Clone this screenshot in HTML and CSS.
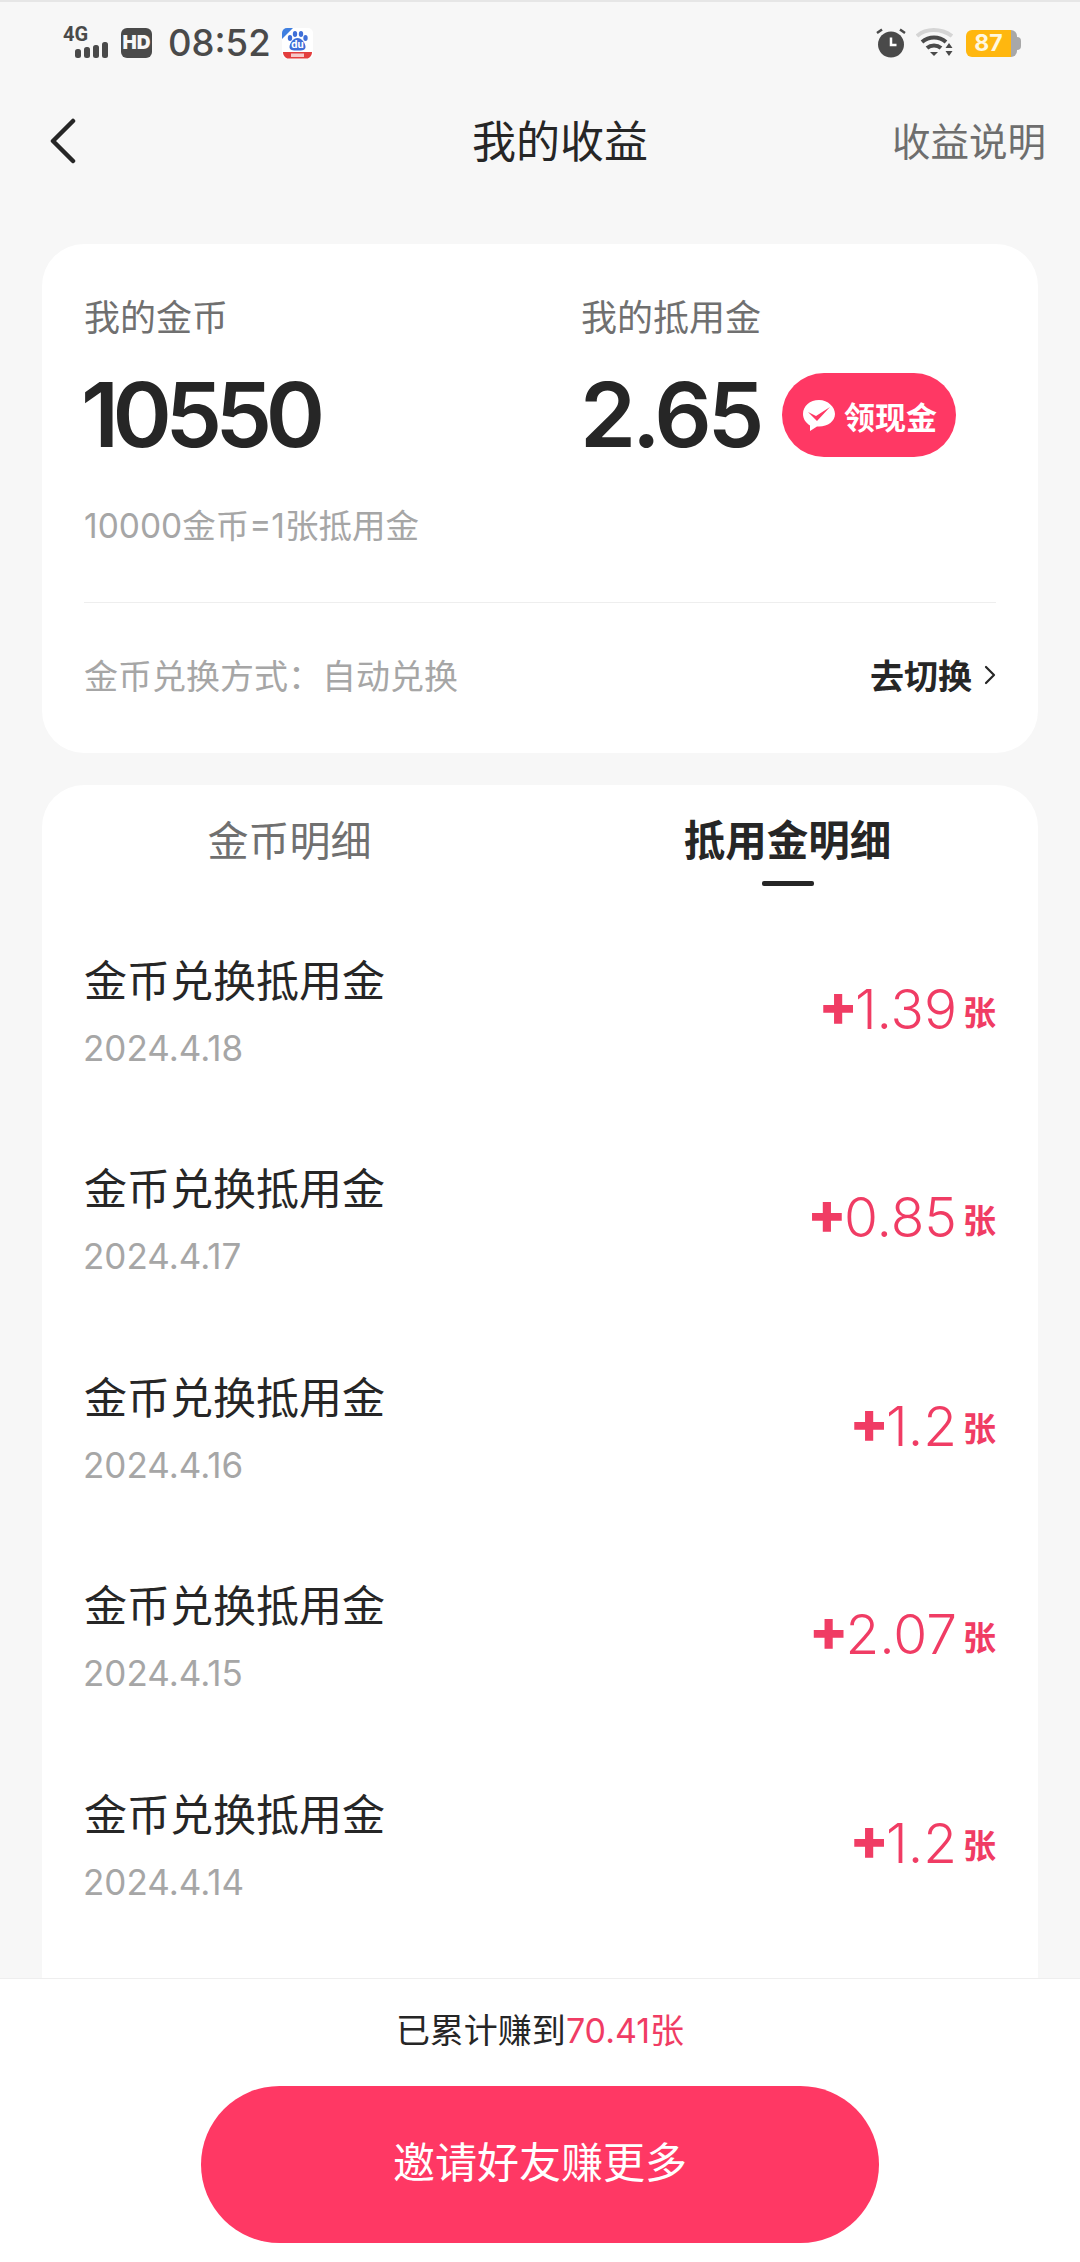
FILE: index.html
```html
<!DOCTYPE html>
<html lang="zh-CN">
<head>
    <meta charset="UTF-8">
    <meta name="viewport" content="width=device-width, initial-scale=1.0">
    <title>我的收益</title>
    <link rel="stylesheet" href="styles.css">
</head>
<body>
    <div class="page">
        <div class="statusbar">
            <div class="status-left">
                <svg class="ic-signal" width="48" height="40" viewBox="0 -5 48 40">
                    <text x="0" y="13" class="sig-text">4G</text>
                    <rect x="12" y="21" width="6" height="9" rx="2.500" fill="#4a4a4a"/>
                    <rect x="21" y="19" width="6" height="11" rx="2.500" fill="#4a4a4a"/>
                    <rect x="30" y="17" width="6" height="13" rx="2.500" fill="#4a4a4a"/>
                    <rect x="39" y="14" width="6" height="16" rx="2.500" fill="#4a4a4a"/>
                </svg>
                <div class="hd">HD</div>
                <div class="time">08:52</div>
                <svg class="ic-app" width="31" height="31" viewBox="0 0 31 31">
                    <rect width="31" height="31" rx="5" fill="#fff"/>
                    <path d="M0 11V5a5 5 0 0 1 5-5h6z" fill="#3f7fe0"/>
                    <ellipse cx="8" cy="10" rx="2.200" ry="3" fill="#3f6fd8"/>
                    <ellipse cx="13" cy="6" rx="2.200" ry="3" fill="#3f6fd8"/>
                    <ellipse cx="19" cy="6" rx="2.200" ry="3" fill="#3f6fd8"/>
                    <ellipse cx="23.500" cy="10" rx="2.200" ry="3" fill="#3f6fd8"/>
                    <path d="M15.500 10c-4 0-8 5-8 9 0 3 3 3.500 8 3.500s8-.5 8-3.500c0-4-4-9-8-9z" fill="#3f6fd8"/>
                    <text x="15.500" y="20" class="app-text">du</text>
                    <path d="M1 24h29c0 4-3 6.500-5 6.500H6c-2 0-5-2.500-5-6.500z" fill="#e33e3e"/>
                    <rect x="9" y="25.500" width="13" height="3.500" fill="#f6c9c9"/>
                </svg>
            </div>
            <div class="status-right">
                <svg width="30" height="30" viewBox="0 0 30 30">
                    <circle cx="15" cy="16.500" r="13" fill="#4a4a4a"/>
                    <path d="M15 9.500v7.500h5.500" fill="none" stroke="#fff" stroke-width="2.500"/>
                    <path d="M1 5l5-3.500M29 5l-5-3.500" stroke="#4a4a4a" stroke-width="2.500" fill="none"/>
                </svg>
                <svg class="ic-wifi" width="40" height="30" viewBox="0 0 40 30">
                    <path d="M1 8c9-8 24-8 35 0" fill="none" stroke="#d5d5d5" stroke-width="4"/>
                    <path d="M6 14c7-6 17-6 24 0" fill="none" stroke="#4a4a4a" stroke-width="4"/>
                    <path d="M11 20c4-3.500 10-3.500 14 0" fill="none" stroke="#4a4a4a" stroke-width="4"/>
                    <path d="M14 24h8l-4 4z" fill="#4a4a4a"/>
                    <path d="M33 15l3.500 5h-7zM29.500 23h7L33 28z" fill="#4a4a4a"/>
                </svg>
                <div class="battery">
                    <div class="battery-fill">87</div>
                    <div class="battery-rest"></div>
                    <div class="battery-nub"></div>
                </div>
            </div>
        </div>

        <div class="navbar">
            <svg class="back" width="30" height="46" viewBox="0 0 30 46">
                <path d="M25 3L5 23l20 20" fill="none" stroke="#262626" stroke-width="4.500" stroke-linecap="round" stroke-linejoin="round"/>
            </svg>
            <div class="nav-title">我的收益</div>
            <div class="nav-link">收益说明</div>
        </div>

        <div class="card summary">
            <div class="balances">
                <div class="balance coins">
                    <div class="balance-label">我的金币</div>
                    <div class="balance-value">10550</div>
                </div>
                <div class="balance">
                    <div class="balance-label">我的抵用金</div>
                    <div class="value-row">
                        <div class="balance-value">2.65</div>
                        <div class="cash-btn">
                            <svg width="34" height="34" viewBox="0 0 34 34">
                                <path d="M17 2C8 2 1 8 1 16c0 5 3 9 7 11.500L8 33l7-4.500h2c9 0 16-5.500 16-12.500S26 2 17 2z" fill="#fff"/>
                                <path d="M6 14l8 4L28 9 15 23z" fill="#ff3864"/>
                            </svg>
                            <span>领现金</span>
                        </div>
                    </div>
                </div>
            </div>
            <div class="rate">10000金币=1张抵用金</div>
            <div class="exchange">
                <div class="exchange-mode">金币兑换方式：自动兑换</div>
                <div class="exchange-link">
                    <span>去切换</span>
                    <svg width="12" height="22" viewBox="0 0 12 22">
                        <path d="M2 3l8 8-8 8" fill="none" stroke="#262626" stroke-width="2.200" stroke-linecap="round" stroke-linejoin="round"/>
                    </svg>
                </div>
            </div>
        </div>

        <div class="card details">
            <div class="tabs">
                <div class="tab">金币明细</div>
                <div class="tab active">抵用金明细</div>
            </div>
            <div class="row">
                <div>
                    <div class="row-title">金币兑换抵用金</div>
                    <div class="row-date">2024.4.18</div>
                </div>
                <div class="amount"><b>+</b>1.39<small>张</small></div>
            </div>
            <div class="row">
                <div>
                    <div class="row-title">金币兑换抵用金</div>
                    <div class="row-date">2024.4.17</div>
                </div>
                <div class="amount"><b>+</b>0.85<small>张</small></div>
            </div>
            <div class="row">
                <div>
                    <div class="row-title">金币兑换抵用金</div>
                    <div class="row-date">2024.4.16</div>
                </div>
                <div class="amount"><b>+</b>1.2<small>张</small></div>
            </div>
            <div class="row">
                <div>
                    <div class="row-title">金币兑换抵用金</div>
                    <div class="row-date">2024.4.15</div>
                </div>
                <div class="amount"><b>+</b>2.07<small>张</small></div>
            </div>
            <div class="row">
                <div>
                    <div class="row-title">金币兑换抵用金</div>
                    <div class="row-date">2024.4.14</div>
                </div>
                <div class="amount"><b>+</b>1.2<small>张</small></div>
            </div>
        </div>

        <div class="footer">
            <div class="total">已累计赚到<span>70.41张</span></div>
            <div class="invite-btn">邀请好友赚更多</div>
        </div>
    </div>
</body>
</html>
```

FILE: styles.css
```css
* { box-sizing: border-box; }
body {
    margin: 0;
    font-family: Inter, "Noto Sans CJK SC", sans-serif;
    background: #f7f7f7;
    color: #262626;
}
.page {
    width: 1080px;
    height: 2262px;
    display: flex;
    flex-direction: column;
    overflow: hidden;
    border-top: 2px solid #e6e6e6;
}

/* status bar */
.statusbar {
    height: 83px;
    flex-shrink: 0;
    padding: 26px 59px 0 63px;
    display: flex;
    justify-content: space-between;
    align-items: flex-start;
}
.status-left, .status-right { display: flex; align-items: center; height: 30px; }
.ic-signal { margin-right: 10px; }
.sig-text { font: 700 20px Roboto, sans-serif; fill: #4a4a4a; }
.hd {
    width: 31px;
    height: 30px;
    border-radius: 6px;
    background: #4a4a4a;
    color: #f7f7f7;
    font-size: 19px;
    font-weight: 900;
    line-height: 30px;
    text-align: center;
    margin-right: 16px;
}
.time {
    font-size: 36.500px;
    font-weight: 500;
    line-height: 30px;
    color: #4a4a4a;
    margin-right: 11px;
}
.app-text { font: 700 11px Roboto, sans-serif; fill: #fff; text-anchor: middle; }
.status-right { gap: 10px; }
.battery { display: flex; align-items: center; height: 27px; width: 55px; }
.battery-fill {
    width: 45px;
    height: 27px;
    background: #ffb70f;
    border-radius: 6px 0 0 6px;
    color: #fff8e0;
    font-size: 23px;
    font-weight: 700;
    line-height: 27px;
    text-align: center;
}
.battery-rest { width: 6px; height: 27px; background: #a8a8a8; border-radius: 0 6px 6px 0; }
.battery-nub { width: 4px; height: 13px; background: #a8a8a8; border-radius: 0 4px 4px 0; }

/* nav */
.navbar {
    height: 108px;
    flex-shrink: 0;
    padding: 0 34px 0 48px;
    display: flex;
    align-items: center;
}
.back { display: block; margin-top: 4px; }
.nav-title {
    flex: 1;
    text-align: center;
    font-size: 44px;
    color: #262626;
    padding-left: 150px;
}
.nav-link { font-size: 38.500px; color: #6e6e6e; }

/* cards */
.card {
    background: #fff;
    margin: 0 42px;
    border-radius: 42px;
}
.summary {
    margin-top: 51px;
    height: 509px;
    padding: 49px 42px 0;
    flex-shrink: 0;
}
.balances { display: flex; }
.coins { width: 497px; }
.balance-label { font-size: 36px; line-height: 50px; color: #707070; margin-bottom: 17px; }
.balance-value {
    font-size: 90px;
    font-weight: 600;
    line-height: 110px;
    color: #262626;
    letter-spacing: -4px;
    margin-left: -1px;
}
.coins .balance-value { letter-spacing: -6.500px; margin-left: -3px; }
.value-row { display: flex; align-items: center; }
.cash-btn {
    margin-left: 22px;
    width: 174px;
    height: 84px;
    border-radius: 42px;
    background: #ff3864;
    color: #fff;
    display: flex;
    align-items: center;
    justify-content: center;
    gap: 8px;
    font-size: 31px;
    font-weight: 700;
}
.rate {
    margin-top: 33px;
    font-size: 33.500px;
    line-height: 46px;
    color: #a6a6a6;
}
.exchange {
    margin-top: 53px;
    height: 144px;
    border-top: 1px solid #eee;
    display: flex;
    justify-content: space-between;
    align-items: center;
}
.exchange-mode { font-size: 34px; color: #a6a6a6; }
.exchange-link {
    display: flex;
    align-items: center;
    gap: 12px;
    font-size: 34px;
    font-weight: 700;
}

/* detail list */
.details {
    margin-top: 32px;
    flex: 1;
    border-radius: 42px 42px 0 0;
    overflow: hidden;
    min-height: 0;
}
.tabs { display: flex; height: 124px; padding-top: 29px; }
.tab {
    width: 496px;
    text-align: center;
    font-size: 41px;
    line-height: 54px;
    color: #707070;
}
.tab.active {
    width: 502px;
    font-size: 41.500px;
    font-weight: 700;
    color: #262626;
    position: relative;
}
.tab.active::after {
    content: "";
    position: absolute;
    left: 50%;
    top: 67px;
    width: 52px;
    height: 5px;
    margin-left: -26px;
    background: #262626;
    border-radius: 2px;
}
.row {
    height: 208.400px;
    padding: 42px 42px 0;
    display: flex;
    justify-content: space-between;
    align-items: flex-start;
}
.row-title { font-size: 43px; line-height: 60px; color: #262626; }
.row-date { margin: 15px 0 0 -1px; font-size: 35px; line-height: 44px; color: #a6a6a6; }
.amount {
    margin-top: 19px;
    font-size: 55px;
    font-weight: 300;
    line-height: 70px;
    color: #f03c64;
    display: flex;
    align-items: center;
}
.amount b { font-size: 58px; font-weight: 800; margin: 0 -3px 8px 0; }
.amount small { font-size: 33px; font-weight: 700; margin: 7px 0 0 6px; }

/* footer */
.footer {
    height: 284px;
    flex-shrink: 0;
    background: #fff;
    border-top: 1px solid #eee;
    text-align: center;
}
.total { padding-top: 28px; font-size: 34px; line-height: 48px; color: #262626; }
.total span { color: #f03c64; }
.invite-btn {
    margin: 31px auto 0;
    width: 678px;
    height: 157px;
    border-radius: 79px;
    background: #ff3864;
    color: #fff;
    font-size: 42px;
    line-height: 154px;
}
```
